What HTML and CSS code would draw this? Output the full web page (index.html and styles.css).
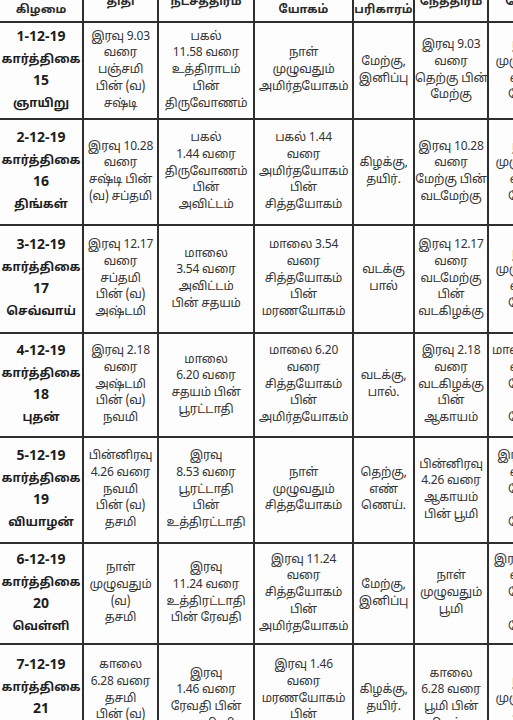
FILE: index.html
```html
<!DOCTYPE html>
<html lang="ta">
<head>
<meta charset="utf-8">
<title>பஞ்சாங்கம்</title>
<link rel="stylesheet" href="styles.css">
</head>
<body>
<div class="viewport">
<table class="almanac">
<colgroup>
<col class="c1"><col class="c2"><col class="c3"><col class="c4"><col class="c5"><col class="c6"><col class="c7">
</colgroup>
<tr class="head">
<th>தேதி<br>கிழமை</th>
<th>திதி</th>
<th>நட்சத்திரம்</th>
<th>நாள்<br>யோகம்</th>
<th>சூலம்<br>பரிகாரம்</th>
<th>நேத்திரம்</th>
<th>யோகி</th>
</tr>
<tr class="r1">
<td class="date">1-12-19<br><span class="tw">கார்த்திகை</span><br>15<br><span class="tw">ஞாயிறு</span></td>
<td>இரவு 9.03<br>வரை<br>பஞ்சமி<br>பின் (வ)<br>சஷ்டி</td>
<td>பகல்<br>11.58 வரை<br>உத்திராடம்<br>பின்<br>திருவோணம்</td>
<td>நாள்<br>முழுவதும்<br>அமிர்தயோகம்</td>
<td>மேற்கு,<br>இனிப்பு</td>
<td>இரவு 9.03<br>வரை<br>தெற்கு பின்<br>மேற்கு</td>
<td>நாள்<br>முழுவதும்<br>வரை<br>நோய்</td>
</tr>
<tr class="r2">
<td class="date">2-12-19<br><span class="tw">கார்த்திகை</span><br>16<br><span class="tw">திங்கள்</span></td>
<td>இரவு 10.28<br>வரை<br>சஷ்டி பின்<br>(வ) சப்தமி</td>
<td>பகல்<br>1.44 வரை<br>திருவோணம்<br>பின்<br>அவிட்டம்</td>
<td>பகல் 1.44<br>வரை<br>அமிர்தயோகம்<br>பின்<br>சித்தயோகம்</td>
<td>கிழக்கு,<br>தயிர்.</td>
<td>இரவு 10.28<br>வரை<br>மேற்கு பின்<br>வடமேற்கு</td>
<td>நாள்<br>முழுவதும்<br>வரை<br>நோய்</td>
</tr>
<tr class="r3">
<td class="date">3-12-19<br><span class="tw">கார்த்திகை</span><br>17<br><span class="tw">செவ்வாய்</span></td>
<td>இரவு 12.17<br>வரை<br>சப்தமி<br>பின் (வ)<br>அஷ்டமி</td>
<td>மாலை<br>3.54 வரை<br>அவிட்டம்<br>பின் சதயம்</td>
<td>மாலை 3.54<br>வரை<br>சித்தயோகம்<br>பின்<br>மரணயோகம்</td>
<td>வடக்கு<br>பால்</td>
<td>இரவு 12.17<br>வரை<br>வடமேற்கு<br>பின்<br>வடகிழக்கு</td>
<td>நாள்<br>முழுவதும்<br>வரை<br>நோய்</td>
</tr>
<tr class="r4">
<td class="date">4-12-19<br><span class="tw">கார்த்திகை</span><br>18<br><span class="tw">புதன்</span></td>
<td>இரவு 2.18<br>வரை<br>அஷ்டமி<br>பின் (வ)<br>நவமி</td>
<td>மாலை<br>6.20 வரை<br>சதயம் பின்<br>பூரட்டாதி</td>
<td>மாலை 6.20<br>வரை<br>சித்தயோகம்<br>பின்<br>அமிர்தயோகம்</td>
<td>வடக்கு,<br>பால்.</td>
<td>இரவு 2.18<br>வரை<br>வடகிழக்கு<br>பின்<br>ஆகாயம்</td>
<td>மாலை 6.20<br>வரை<br>நோய்<br>பின்<br>நோய்</td>
</tr>
<tr class="r5">
<td class="date">5-12-19<br><span class="tw">கார்த்திகை</span><br>19<br><span class="tw">வியாழன்</span></td>
<td>பின்னிரவு<br>4.26 வரை<br>நவமி<br>பின் (வ)<br>தசமி</td>
<td>இரவு<br>8.53 வரை<br>பூரட்டாதி<br>பின்<br>உத்திரட்டாதி</td>
<td>நாள்<br>முழுவதும்<br>சித்தயோகம்</td>
<td>தெற்கு,<br>எண்<br>ணெய்.</td>
<td>பின்னிரவு<br>4.26 வரை<br>ஆகாயம்<br>பின் பூமி</td>
<td>இரவு 8.53<br>வரை<br>நோய்<br>பின்<br>நோய்</td>
</tr>
<tr class="r6">
<td class="date">6-12-19<br><span class="tw">கார்த்திகை</span><br>20<br><span class="tw">வெள்ளி</span></td>
<td>நாள்<br>முழுவதும்<br>(வ)<br>தசமி</td>
<td>இரவு<br>11.24 வரை<br>உத்திரட்டாதி<br>பின் ரேவதி</td>
<td>இரவு 11.24<br>வரை<br>சித்தயோகம்<br>பின்<br>அமிர்தயோகம்</td>
<td>மேற்கு,<br>இனிப்பு</td>
<td>நாள்<br>முழுவதும்<br>பூமி</td>
<td>இரவு 11.24<br>வரை<br>நோய்<br>பின்<br>நோய்</td>
</tr>
<tr class="r7">
<td class="date">7-12-19<br><span class="tw">கார்த்திகை</span><br>21<br><span class="tw">சனி</span></td>
<td>காலை<br>6.28 வரை<br>தசமி<br>பின் (வ)<br>ஏகாதசி</td>
<td>இரவு<br>1.46 வரை<br>ரேவதி பின்<br>அசுவினி</td>
<td>இரவு 1.46<br>வரை<br>மரணயோகம்<br>பின்<br>சித்தயோகம்</td>
<td>கிழக்கு,<br>தயிர்.</td>
<td>காலை<br>6.28 வரை<br>பூமி பின்<br>கிழக்கு</td>
<td>நாள்<br>முழுவதும்<br>சமம்</td>
</tr>
</table>
</div>
</body>
</html>
```
FILE: styles.css
```css
html, body {
  margin: 0;
  padding: 0;
  background: #fdfdfd;
}
.viewport {
  width: 513px;
  height: 720px;
  overflow: hidden;
}
.almanac {
  table-layout: fixed;
  border-collapse: collapse;
  width: 566px;
  margin-top: -19px;
  margin-left: -2px;
  font-family: "Noto Sans Tamil", "Lohit Tamil", "Noto Sans", "DejaVu Sans", sans-serif;
  color: #333333;
}
.c1 { width: 84px; }
.c2 { width: 75px; }
.c3 { width: 96px; }
.c4 { width: 99px; }
.c5 { width: 61px; }
.c6 { width: 74px; }
.c7 { width: 77px; }
.almanac th,
.almanac td {
  border: 2px solid #2e2e2e;
  padding: 0;
  text-align: center;
  vertical-align: middle;
  overflow: hidden;
  white-space: nowrap;
}
.almanac th {
  font-size: 11.5px;
  font-weight: bold;
  line-height: 17px;
  color: #2a2a2a;
}
.almanac td {
  font-size: 12px;
  line-height: 16.7px;
  letter-spacing: -0.2px;
}
.almanac td.date {
  font-size: 14px;
  font-weight: bold;
  line-height: 22px;
  letter-spacing: 0;
  color: #1e1e1e;
}
.almanac td.date .tw {
  font-size: 12px;
}
.head { height: 40px; }
.r1 { height: 97px; }
.r2 { height: 106px; }
.r3 { height: 108px; }
.r4 { height: 104px; }
.r5 { height: 106px; }
.r6 { height: 101px; }
.r7 { height: 110px; }
```
